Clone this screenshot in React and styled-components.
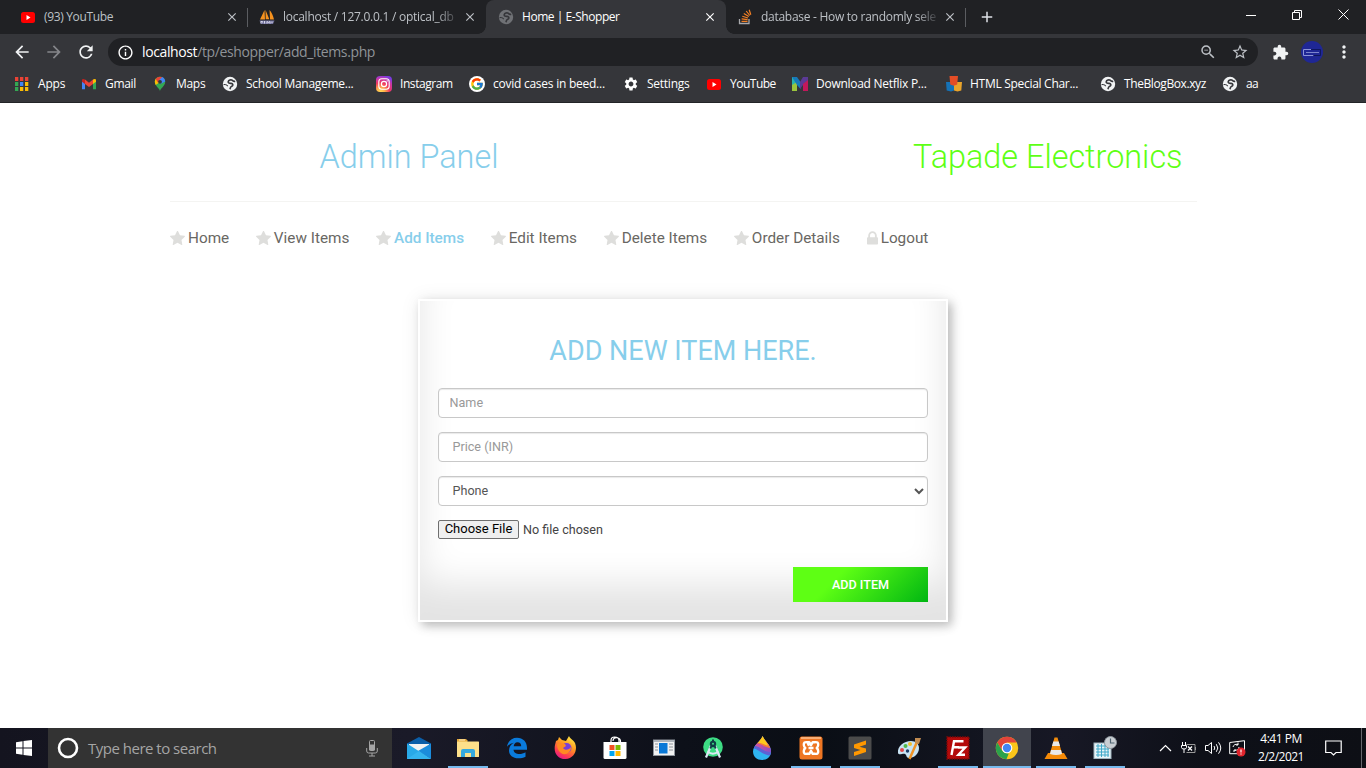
import React from "react";
import styled, { createGlobalStyle, css } from "styled-components";
import {
  MdArrowBack, MdArrowForward, MdRefresh, MdInfoOutline, MdExtension,
  MdMoreVert, MdStarBorder, MdSettings, MdZoomOut, MdClose, MdAdd,
} from "react-icons/md";
import { FcGoogle } from "react-icons/fc";

const Global = createGlobalStyle`
  *, *::before, *::after { box-sizing: border-box; }
  body { margin: 0; background: #fff; overflow: hidden; }
  svg { display: block; flex: none; }
`;

const ui = `"Segoe UI", "Open Sans", "Noto Sans", sans-serif`;

const Screen = styled.div`
  width: 1366px;
  height: 768px;
  display: flex;
  flex-direction: column;
  overflow: hidden;
`;

/* ---------- browser chrome ---------- */
const TabStrip = styled.header`
  height: 34px;
  flex: none;
  display: flex;
  background: #202124;
  padding-left: 8px;
  font: 12px/34px ${ui};
`;
const Tab = styled.div`
  position: relative;
  width: ${(p) => p.$w}px;
  padding: 0 9px 0 ${(p) => p.$pad}px;
  display: flex;
  align-items: center;
  color: ${(p) => (p.$active ? "#fff" : "#bdc1c6")};
  ${(p) => p.$line && css`
    background: linear-gradient(#5b5d61, #5b5d61) right 8px / 1px 19px no-repeat;
  `}
  ${(p) => p.$active && css`
    background: #35363a;
    border-radius: 8px 8px 0 0;
    &::before, &::after {
      content: "";
      position: absolute;
      bottom: 0;
      width: 8px;
      height: 8px;
    }
    &::before { left: -8px; background: radial-gradient(circle at 0 0, transparent 7.5px, #35363a 8px); }
    &::after { right: -8px; background: radial-gradient(circle at 100% 0, transparent 7.5px, #35363a 8px); }
  `}
`;
const TabTitle = styled.span`
  flex: 1;
  margin: 0 8px;
  margin-right: ${(p) => (p.$fade ? 6 : 8)}px;
  white-space: nowrap;
  letter-spacing: ${(p) => p.$ls || 0}px;
  ${(p) => p.$fade && css`mask-image: linear-gradient(90deg, #000 88%, rgba(0, 0, 0, 0.15) 100%);`}
`;
const NewTab = styled.div`
  width: 42px;
  display: flex;
  align-items: center;
  justify-content: center;
  color: #dee1e6;
`;
const WindowButtons = styled.div`
  margin-left: auto;
  display: flex;
  height: 29px;
`;
const WindowButton = styled.div`
  width: 46px;
  display: flex;
  align-items: center;
  justify-content: center;
`;

const Toolbar = styled.div`
  height: 36px;
  flex: none;
  background: #35363a;
  display: flex;
  align-items: center;
  padding-left: 12px;
`;
const ToolButton = styled.div`
  width: 32px;
  margin-left: ${(p) => p.$before || 0}px;
  padding-right: ${(p) => (p.$wide ? 0 : 12)}px;
  display: flex;
  align-items: center;
  justify-content: center;
  color: ${(p) => (p.$dim ? "#85868a" : "#f1f3f4")};
`;
const Omnibox = styled.div`
  width: 1150px;
  height: 28px;
  border-radius: 14px;
  background: #202124;
  display: flex;
  align-items: center;
  padding: 0 9px 0 9px;
  color: #fff;
  font: 14px/28px ${ui};
`;
const Url = styled.span`
  flex: 1;
  margin-left: 8px;
  color: #8f9398;
  letter-spacing: -0.38px;
  b { font-weight: 400; color: #fff; }
`;
const OmniActions = styled.div`
  display: flex;
  gap: 14px;
  color: #bdc1c6;
`;
const Avatar = styled.div`
  width: 22px;
  height: 22px;
  margin: 0 5px;
  border-radius: 50%;
  background: #1f2795;
  display: flex;
  align-items: center;
  justify-content: center;
`;

const Bookmarks = styled.nav`
  height: 33px;
  flex: none;
  background: #35363a;
  border-bottom: 1px solid #232427;
  display: flex;
  padding: 0 0 4px 14px;
  font: 12px/28px ${ui};
  color: #fff;
`;
const Bookmark = styled.div`
  width: ${(p) => p.$w}px;
  display: flex;
  align-items: center;
  gap: 8px;
  white-space: nowrap;
  letter-spacing: ${(p) => p.$ls}px;
`;

/* ---------- page ---------- */
const Page = styled.main`
  flex: 1;
  font-family: Roboto, sans-serif;
  padding-left: 170px;
`;
const Brand = styled.div`
  width: 1027px;
  height: 99px;
  border-bottom: 1px solid #f4f4f2;
  padding: 34px 14.500px 0 149.500px;
  display: flex;
  justify-content: space-between;
  font-size: 32.4px;
  line-height: 40px;
  font-weight: 300;
`;
const BrandText = styled.span`
  color: ${(p) => p.$color};
`;
const Menu = styled.nav`
  display: flex;
  gap: 26.7px;
  padding-top: 26px;
  font-size: 15.3px;
  line-height: 20px;
`;
const MenuItem = styled.a`
  display: flex;
  align-items: center;
  gap: 3px;
  color: ${(p) => (p.$active ? "#87ceeb" : "#696763")};
  font-weight: ${(p) => (p.$active ? 500 : 400)};
`;
const Card = styled.form`
  width: 530px;
  height: 323px;
  margin: 51px 0 0 248px;
  padding: 35px 18px 0;
  border: 2px solid #fff;
  background: #fff;
  box-shadow: inset 0 -36px 36px #e4e4e4, 0 0 18px rgba(0, 0, 0, 0.08),
    4px 4px 9px rgba(0, 0, 0, 0.23);
  display: flex;
  flex-direction: column;
`;
const CardTitle = styled.h2`
  margin: 0 0 22px;
  height: 30px;
  text-align: center;
  color: #87ceeb;
  font-size: 27px;
  line-height: 30px;
  font-weight: 400;
`;
const fieldStyle = css`
  width: 100%;
  height: 30px;
  flex: none;
  margin: 0 0 14px;
  border: 1px solid #c8c8c8;
  border-radius: 4px;
  background: #fff;
  box-shadow: inset 0 1px 1px rgba(0, 0, 0, 0.09);
  font: 12.6px Roboto, sans-serif;
  color: #555;
  outline: 0;
`;
const Field = styled.input`
  ${fieldStyle}
  padding: 0 10px 1px ${(p) => p.$indent}px;
  &::placeholder { color: #999; }
`;
const Select = styled.select`
  ${fieldStyle}
  padding: 0 0 1px 9.500px;
`;
const FileRow = styled.div`
  display: flex;
  align-items: center;
  height: 19px;
  gap: 4px;
  color: #444;
  font-size: 12.6px;
`;
const FileButton = styled.button`
  width: 81px;
  height: 19px;
  padding: 0 0 2px;
  border: 1px solid #6f6f6f;
  border-radius: 2px;
  background: #efefef;
  font: 13px/15px Roboto, sans-serif;
  color: #000;
  white-space: nowrap;
`;
const Submit = styled.button`
  width: 135px;
  height: 35px;
  margin: 28px 0 0 auto;
  border: 0;
  padding: 0;
  background: linear-gradient(135deg, #5eff14 32%, #00b612 100%);
  color: #fff;
  font: 500 12.6px Roboto, sans-serif;
`;

/* ---------- task bar ---------- */
const TaskBar = styled.footer`
  height: 40px;
  flex: none;
  display: flex;
  background: linear-gradient(90deg, #14141f 0, #1a1a28 30%, #0d1019 50%, #0a0e15 60%, #171825 78%, #0e1018 88%, #0d0f15 100%);
  font-family: ${ui};
  color: #fff;
`;
const Start = styled.div`
  width: 48px;
  display: flex;
  align-items: center;
  justify-content: center;
`;
const Search = styled.div`
  width: 344px;
  background: #333;
  display: flex;
  align-items: center;
  padding: 0 14px 0 9px;
  color: #a5a5a5;
  font-size: 15px;
  letter-spacing: -0.5px;
  span { flex: 1; margin-left: 9px; }
`;
const Apps = styled.div`
  display: flex;
  gap: 1px;
  padding-left: 3px;
`;
const App48 = styled.div`
  width: 48px;
  display: flex;
  align-items: center;
  justify-content: center;
  ${(p) => p.$open && css`background: linear-gradient(#76b9ed, #76b9ed) center bottom / 40px 2px no-repeat;`}
  ${(p) => p.$focus && css`background: linear-gradient(#76b9ed, #76b9ed) center bottom / 48px 2px no-repeat #41444d;`}
`;
const Tray = styled.div`
  margin-left: auto;
  display: flex;
  align-items: center;
`;
const TrayIcon = styled.div`
  width: ${(p) => p.$w}px;
  display: flex;
  justify-content: center;
`;
const Clock = styled.div`
  width: 62px;
  margin-left: 1px;
  text-align: center;
  font-size: 12px;
  line-height: 18px;
  letter-spacing: -0.5px;
  white-space: nowrap;
`;
const Peek = styled.div`
  width: 5px;
  height: 40px;
  margin-left: 7px;
  border-left: 1px solid #65666c;
`;

/* ---------- small icons ---------- */
const YouTube = () => (
  <svg width="16" height="16" viewBox="0 0 16 16">
    <rect x="1" y="3" width="14" height="11" rx="2.500" fill="#f00" />
    <path d="M6.500 6v5l4-2.500z" fill="#fff" />
  </svg>
);
const Globe = ({ fg = "#f1f3f4", bg = "#35363a" }) => (
  <svg width="16" height="16" viewBox="0 0 16 16">
    <circle cx="8" cy="8" r="7.200" fill={fg} />
    <path d="M13.200 5.200C11.800 5.600 10.800 5 10.200 4.200 9 3.400 6.600 4 6.200 5.700c-.3 1.500 1.300 1.600 2.600 1.700 1.700.1 2.300 1 1.900 2-.4.900-1.500 1-2 1.700-.4.700-.4 1.400-1 2" fill="none" stroke={bg} strokeWidth="1.600" />
    <path d="M1.600 8.600c1.500-.2 3.200.1 4.200 1.500" fill="none" stroke={bg} strokeWidth="1.100" />
  </svg>
);
const PhpMyAdmin = () => (
  <svg width="16" height="16" viewBox="0 0 16 16">
    <path d="M5.500 1 1 10.500h5zM6.500.8l.2 9.500h3.600zM10.500 1l.6 9.500H15C14 6.500 12.500 3 10.500 1z" fill="#f6921e" />
    <path d="M.5 11.500h15L14 15H2z" fill="#75759f" />
    <path d="M2 14.500v-2l1.500 0v1M5.500 14.500v-2.500M8 14.500v-2l1.500 1 1.500-1v2M13 14v-1.500" fill="none" stroke="#d8d8ea" />
  </svg>
);
const StackOverflow = () => (
  <svg width="16" height="16" viewBox="0 0 16 16" fill="none">
    <path d="M2.500 10v4.500h9.500V10" stroke="#a8a9ac" strokeWidth="1.300" />
    <path d="M4.500 12.300h6M4.600 9.900l6 .7M5.300 7.200l5.700 1.800M6.800 4.400l5 3.200M9.200 2l3.600 4.500M12.200.8l1.600 4.900" stroke="#f48024" strokeWidth="1.200" />
  </svg>
);
const AppsGrid = () => (
  <svg width="16" height="16" viewBox="0 0 16 16">
    {["#ea4335", "#ea4335", "#ea4335", "#34a853", "#4285f4", "#fbbc05", "#34a853", "#fbbc05", "#fbbc05"].map((c, i) => (
      <rect key={i} x={1 + (i % 3) * 5} y={1 + Math.floor(i / 3) * 5} width="3.300" height="4" fill={c} />
    ))}
  </svg>
);
const Gmail = () => (
  <svg width="16" height="16" viewBox="0 0 16 16">
    <path d="M1 4.500v8.800h3V7z" fill="#4285f4" />
    <path d="M12 7v6.300h3V4.500z" fill="#34a853" />
    <path d="M4 3.600v4.300l4 3 4-3V3.600L8 6.700z" fill="#ea4335" />
    <path d="M1 5.700V4.300c0-1.600 1.700-1.800 3-.7v4.300z" fill="#c5221f" />
    <path d="M15 5.700V4.300c0-1.600-1.700-1.800-3-.7v4.300z" fill="#fbbc04" />
  </svg>
);
const MapPin = () => (
  <svg width="16" height="16" viewBox="0 0 16 16">
    <path d="M8 15.500c0-3 5.200-5 5.200-9.700C13.200 2.700 10.800.7 8 .7S2.800 2.700 2.800 5.800C2.800 10.500 8 12.500 8 15.500z" fill="#34a853" />
    <path d="M4 2.500 8 6 3.700 9C2.500 6.800 2.500 4.500 4 2.500z" fill="#fbbc04" />
    <path d="M3.700 2.900C5.200.5 8.500.2 10.500 1.300L5.800 6.500z" fill="#ea4335" />
    <path d="M7 4.300 10.200 1c2 .8 3 2.800 3 4.500L8.500 8z" fill="#4285f4" />
    <circle cx="8" cy="5.800" r="1.900" fill="#35363a" />
  </svg>
);
const Instagram = () => (
  <svg width="16" height="16" viewBox="0 0 16 16">
    <defs>
      <radialGradient id="ig" cx=".28" cy="1" r="1.050">
        <stop offset="0" stopColor="#fd5" /><stop offset=".25" stopColor="#ffb04a" />
        <stop offset=".55" stopColor="#f0385f" /><stop offset=".8" stopColor="#c837ab" /><stop offset="1" stopColor="#7a3be0" />
      </radialGradient>
    </defs>
    <rect width="16" height="16" rx="4" fill="url(#ig)" />
    <rect x="2.800" y="2.800" width="10.400" height="10.400" rx="3" fill="none" stroke="#fff" strokeWidth="1.100" />
    <circle cx="8" cy="8" r="2.600" fill="none" stroke="#fff" strokeWidth="1.200" />
    <circle cx="11.200" cy="4.900" r=".7" fill="#fff" />
  </svg>
);
const Disc = styled.span`
  width: 16px;
  height: 16px;
  border-radius: 50%;
  background: #fff;
  display: flex;
  align-items: center;
  justify-content: center;
`;
const NetflixM = () => (
  <svg width="16" height="16" viewBox="0 0 16 16">
    <path d="M0 1h5v14H0z" fill="#27b5ad" /><path d="M0 9l5-3v9H0z" fill="#9bc53d" />
    <path d="M0 1h5l3.500 5v7L5 9z" fill="#1779ba" /><path d="M8 6l3-5h5v6l-5 2-3 4z" fill="#5b3a96" />
    <path d="M11 8l5-4v11h-5z" fill="#c2185b" />
  </svg>
);
const HtmlBoxes = () => (
  <svg width="16" height="16" viewBox="0 0 16 16">
    <path d="M0 6h8v8.500l-3 1-4.300-1z" fill="#1572b6" /><path d="M8 6h8l-.7 8.500-3.800 1-3.500-1z" fill="#e9a42b" />
    <path d="M3.500 0h8.500l-.8 8.500-3.500 1.300L4.300 8.500z" fill="#e44d26" />
  </svg>
);
const Star = () => (
  <svg width="15" height="15" viewBox="64 64 1664 1664" fill="#dededc">
    <path d="M1728 647q0 22-26 48l-363 354 86 500q1 7 1 20 0 21-10.500 35.500t-30.500 14.500q-19 0-40-12l-449-236-449 236q-22 12-40 12-21 0-31.500-14.500t-10.500-35.500q0-6 2-20l86-500-364-354q-25-27-25-48 0-37 56-46l502-73 225-455q19-41 49-41t49 41l225 455 502 73q56 9 56 46z" />
  </svg>
);
const Lock = () => (
  <svg width="11" height="15" viewBox="320 150 1152 1500" fill="#dededc">
    <path d="M640 768h512v-192q0-106-75-181t-181-75-181 75-75 181v192zm832 96v576q0 40-28 68t-68 28h-960q-40 0-68-28t-28-68v-576q0-40 28-68t68-28h32v-192q0-184 132-316t316-132 316 132 132 316v192h32q40 0 68 28t28 68z" />
  </svg>
);

/* ---------- task bar icons ---------- */
const Icon24 = ({ children }) => <svg width="24" height="24" viewBox="0 0 24 24">{children}</svg>;
const Mail = () => (
  <Icon24>
    <path d="M0 7.500 12 1l12 6.500v2L12 17 0 9.500z" fill="#0b5ea8" />
    <path d="M2 8h20v8H2z" fill="#f2f2f2" />
    <path d="M0 7.500 24 23H0z" fill="#29a9e8" /><path d="M24 7.500V23L11 15z" fill="#1b8cdc" /><path d="M0 23h24L12 15z" fill="#35b4ef" />
  </Icon24>
);
const Explorer = () => (
  <Icon24>
    <path d="M1 3h9l1.500 1.500V7H1z" fill="#e5a93a" /><rect x="3" y="3.500" width="6" height="1" fill="#fff4c7" />
    <rect x="1" y="5.500" width="22" height="15.500" rx=".6" fill="#fde08a" />
    <path d="M5 21v-6q0-2 2-2h10q2 0 2 2v6h-4v-4H9v4z" fill="#35a9de" />
  </Icon24>
);
const Edge = () => (
  <Icon24>
    <path d="M2 10.800C3 4.800 7 1.800 12 1.800c6 0 10 4.200 10 10.200v1.800H8.500c.3 3 3 4.200 5.800 4.200 2.200 0 4.400-.6 6.200-1.800v4.600c-2 1.100-4.700 1.500-7 1.500C7.800 22.300 4 19.400 4 14.500c0-3.600 2-6.400 5-7.800-3 .5-5.500 2-7 4.100zM8.700 10.200h7.500c0-2.700-1.300-4-3.700-4-2.300 0-3.600 1.700-3.800 4z" fill="#0a7bdc" />
  </Icon24>
);
const Firefox = () => (
  <Icon24>
    <defs><linearGradient id="ff" x1=".8" y1="0" x2=".25" y2="1"><stop offset="0" stopColor="#fff04a" /><stop offset=".4" stopColor="#ff9a1f" /><stop offset=".75" stopColor="#ff3f4e" /><stop offset="1" stopColor="#e3168a" /></linearGradient></defs>
    <path d="M2 5l2-1 1-3 3 3 4 1 3-5c1 3 4 3.500 6 7 3 7-1 16-9.500 16S-.5 16 1 9z" fill="url(#ff)" />
    <circle cx="12.500" cy="12" r="5" fill="#7a3fd8" />
    <path d="M3 8c3-2 5 0 8 0l1 2-3 2c2 3 6 2 8-1 0 6-6 9-10 6-3-2-4-6-4-9z" fill="#ff8a22" />
  </Icon24>
);
const Store = () => (
  <Icon24>
    <path d="M8 7V4.500C8 2.300 9.200 1 11.500 1S16 2.300 16 4.500V7M10 5c0-5 8-4 7.500 1" fill="none" stroke="#fff" strokeWidth="1.200" />
    <path d="M.5 6h23v15.500q0 1.500-1.500 1.500H2Q.5 23 .5 21.500z" fill="#fff" />
    <path d="M6.500 9h5v5h-5z" fill="#f25022" /><path d="M12.500 9h5v5h-5z" fill="#7fba00" />
    <path d="M6.500 15h5v5h-5z" fill="#00a4ef" /><path d="M12.500 15h5v5h-5z" fill="#ffb900" />
  </Icon24>
);
const NewsWindow = () => (
  <Icon24>
    <rect x="1.500" y="4" width="21" height="15.500" fill="#f1f1f1" stroke="#8e949c" /><path d="M2 4h20v2H2z" fill="#aeb4bb" />
    <rect x="7" y="7" width="8.500" height="10.500" fill="#0a78d7" />
    <path d="M3 8h3M3 11h3M3 14h3M17 8h4M17 11h4M17 14h4" stroke="#8d9299" />
  </Icon24>
);
const AndroidStudio = () => (
  <Icon24>
    <circle cx="12" cy="11" r="9.800" fill="#3ddc84" />
    <path d="M12 3.500v2" stroke="#0f3d45" strokeWidth="2" /><circle cx="12" cy="8" r="3.200" fill="#0f3d45" />
    <path d="M9.800 10 5 21.500M14.200 10 19 21.500" stroke="#dce9f4" strokeWidth="2.200" fill="none" />
    <path d="M6.500 15.500q5.500 4.500 11 0" stroke="#dce9f4" strokeWidth="1.800" fill="none" />
    <path d="M9.500 9.500 8.500 12l1.500 1 2-3.500 2 3.500 1.500-1-1-2.500z" fill="#0f3d45" />
    <circle cx="12" cy="7.800" r="1" fill="#3ddc84" />
  </Icon24>
);
const PaintDrop = () => (
  <Icon24>
    <defs>
      <clipPath id="drop"><path d="M12.500 0c-1 5-9.500 9-9.500 15.500C3 20.500 7 24 12 24s9-3.500 9-8.500C21 9 15 6 12.500 0z" /></clipPath>
      <linearGradient id="band" x1="0" x2="1"><stop offset="0" stopColor="#f0508c" /><stop offset="1" stopColor="#7c4fd0" /></linearGradient>
    </defs>
    <g clipPath="url(#drop)">
      <path d="M0 0h24v24H0z" fill="#2fb4f0" />
      <path d="M0 12C8 10 12 22 24 19V4H0z" fill="#5d62d4" />
      <path d="M0 10C9 7 13 18 24 16V4H0z" fill="url(#band)" />
      <path d="M4 8c6-2 10 4 18 4V2L12-1z" fill="#f4793c" />
      <path d="M6 7c5-1 8 2 12 2.500L13-1z" fill="#fdc91d" />
    </g>
  </Icon24>
);
const Xampp = () => (
  <Icon24>
    <rect x=".5" y=".5" width="23" height="23" rx="2.500" fill="#ee7623" /><path d="M2 1h20v2H2z" fill="#f8ae75" />
    <path d="M12 9.500H9.200a2.600 2.600 0 1 1 2.600-2.600M6 8.500v7M18 8.500v7" fill="none" stroke="none" />
    <path d="M10 9.800 8.300 6.200Q4.500 5.500 4.800 9q.2 2 1.500 3-1.300 1-1.500 3-.3 3.500 3.500 2.800h2l1.700-3 1.700 3h2q3.800.7 3.500-2.800-.2-2-1.500-3 1.300-1 1.500-3 .3-3.500-3.500-2.800h-2l-1.700 3-1.700-3h-2M9.500 12h5" fill="none" stroke="#fff" strokeWidth="2.400" strokeLinejoin="round" />
  </Icon24>
);
const Sublime = () => (
  <Icon24>
    <rect x=".5" y=".5" width="23" height="23" rx="1.500" fill="#4b4b4b" />
    <path d="M6 8.500 18 4.500v4l-6.500 2.200L18 12.500V16L6 20v-4l6.500-2L6 12z" fill="#ff9800" />
  </Icon24>
);
const Paint = () => (
  <Icon24>
    <path d="M1 17C0 10 7 5 14 5c5 0 8 3 8 7 0 6-5 10-10 10-3 0-2-3-4-4s-6 2-7-1z" fill="#c8e3f3" />
    <circle cx="5" cy="14" r="2" fill="#e34848" /><circle cx="8.500" cy="10" r="2" fill="#51b848" /><circle cx="13" cy="8" r="2" fill="#f3bd2d" /><circle cx="10.500" cy="15" r="1.700" fill="#1b3b65" />
    <path d="M20 6 12.500 23" stroke="#f09426" strokeWidth="2.500" /><path d="M18 2l6 0-2 6-4-1z" fill="#c08b51" />
  </Icon24>
);
const FileZilla = () => (
  <Icon24>
    <rect x="1" y="1" width="22" height="22" fill="#b30a0a" stroke="#7d0909" strokeWidth="1.500" strokeDasharray="1.500 1" />
    <path d="M5.500 19 8 5.200h9.500M7 11.200h6M12 11.500h7.200l-6.800 7.300H19" fill="none" stroke="#fff" strokeWidth="2.400" />
  </Icon24>
);
const Chrome = () => (
  <Icon24>
    <circle cx="12" cy="12" r="11.200" fill="#fbc61a" />
    <path d="M2.300 6.400A11.200 11.200 0 0 1 21.700 6.400H12L7.200 14.800z" fill="#e2443a" />
    <path d="M2.300 6.400 7.200 14.800q2 3 6.500 2.600L11.500 23.200A11.200 11.200 0 0 1 2.300 6.400z" fill="#2ba24c" />
    <circle cx="12" cy="12" r="5.300" fill="#fff" /><circle cx="12" cy="12" r="4.200" fill="#4285f4" />
  </Icon24>
);
const Vlc = () => (
  <Icon24>
    <path d="M4 17h16l3.500 6H.5z" fill="#f58a07" /><path d="M10.500 1.500h3L18.500 19q-6.500 3-13 0z" fill="#f28c0c" />
    <path d="M9.300 5.500h5.400l1.300 4.500H8zM7 14h10l1 4q-6 2-12 0z" fill="#e9e9e9" />
  </Icon24>
);
const TaskGrid = () => (
  <Icon24>
    <rect x="1" y="7" width="17" height="15.500" fill="#e8f4f8" stroke="#9fb3bd" />
    <path d="M3 10h13M3 13h13M3 16h13M3 19h13M5 8v13M8.500 8v13M12 8v13M15 8v13" stroke="#3fa9c9" />
    <circle cx="17.500" cy="6.500" r="6" fill="#c9ced3" stroke="#8d959c" /><path d="M17.500 2.500v4.500h4" fill="none" stroke="#4f6472" strokeWidth="1.200" />
  </Icon24>
);

const bookmarks = [
  ["Apps", AppsGrid, 67, -0.2], ["Gmail", Gmail, 71, -0.3], ["Maps", MapPin, 70, -0.3],
  ["School Manageme...", Globe, 154, -0.27], ["Instagram", Instagram, 93, -0.42],
  ["covid cases in beed...", () => <Disc><FcGoogle size={14} /></Disc>, 154, -0.25],
  ["Settings", () => <MdSettings size={16} />, 83, -0.25], ["YouTube", YouTube, 86, -0.5],
  ["Download Netflix P...", NetflixM, 154, -0.27], ["HTML Special Char...", HtmlBoxes, 154, -0.29],
  ["TheBlogBox.xyz", Globe, 122, -0.4], ["aa", Globe, 50, -0.6],
];
const menu = ["Home", "View Items", "Add Items", "Edit Items", "Delete Items", "Order Details", "Logout"];
const apps = [
  [Mail], [Explorer, 1], [Edge], [Firefox], [Store], [NewsWindow], [AndroidStudio], [PaintDrop],
  [Xampp, 1], [Sublime, 1], [Paint], [FileZilla, 1], [Chrome, 1, 1], [Vlc, 1], [TaskGrid, 1],
];

export default function App() {
  return (
    <Screen>
      <Global />
      <TabStrip>
        <Tab $w={240} $pad={12} $line>
          <YouTube /><TabTitle $ls={-0.35}>(93) YouTube</TabTitle><MdClose size={14} />
        </Tab>
        <Tab $w={238} $pad={11}>
          <PhpMyAdmin /><TabTitle $fade $ls={-0.26}>localhost / 127.0.0.1 / optical_db</TabTitle><MdClose size={14} />
        </Tab>
        <Tab $w={240} $pad={12} $active>
          <Globe fg="#6f7175" /><TabTitle $ls={-0.45}>Home | E-Shopper</TabTitle><MdClose size={14} />
        </Tab>
        <Tab $w={240} $pad={11} $line>
          <StackOverflow /><TabTitle $fade $ls={-0.28}>database - How to randomly sele</TabTitle><MdClose size={14} />
        </Tab>
        <NewTab><MdAdd size={18} /></NewTab>
        <WindowButtons>
          <WindowButton><svg width="10" height="10" stroke="#fff"><path d="M0 5.500h10" /></svg></WindowButton>
          <WindowButton><svg width="10" height="10" fill="none" stroke="#fff"><path d="M.5 2.500h7v7h-7zM2.500 2.500v-2h7v7h-2" /></svg></WindowButton>
          <WindowButton><svg width="11" height="11" stroke="#fff"><path d="M.5.5l10 10M10.500.5l-10 10" /></svg></WindowButton>
        </WindowButtons>
      </TabStrip>
      <Toolbar>
        <ToolButton><MdArrowBack size={20} /></ToolButton>
        <ToolButton $dim><MdArrowForward size={20} /></ToolButton>
        <ToolButton><MdRefresh size={20} /></ToolButton>
        <Omnibox>
          <MdInfoOutline size={17} />
          <Url><b>localhost</b>/tp/eshopper/add_items.php</Url>
          <OmniActions><MdZoomOut size={18} /><MdStarBorder size={18} /></OmniActions>
        </Omnibox>
        <ToolButton $wide $before={6}><MdExtension size={17} /></ToolButton>
        <Avatar><svg width="18" height="7" fill="none"><path d="M8 .5H.5v6h10" stroke="#8c93d8" /><path d="M8 .5h9.500v6h-7" stroke="#10175d" /><path d="M3 3.500h13" stroke="#7c84cc" /></svg></Avatar>
        <ToolButton $wide><MdMoreVert size={20} /></ToolButton>
      </Toolbar>
      <Bookmarks>
        {bookmarks.map(([name, Icon, w, ls], i) => (
          <Bookmark key={i} $w={w} $ls={ls}><Icon />{name}</Bookmark>
        ))}
      </Bookmarks>

      <Page>
        <Brand>
          <BrandText $color="#87ceeb">Admin Panel</BrandText>
          <BrandText $color="#5eff14">Tapade Electronics</BrandText>
        </Brand>
        <Menu>
          {menu.map((m) => (
            <MenuItem key={m} $active={m === "Add Items"}>{m === "Logout" ? <Lock /> : <Star />}{m}</MenuItem>
          ))}
        </Menu>
        <Card>
          <CardTitle>ADD NEW ITEM HERE.</CardTitle>
          <Field $indent={10.5} placeholder="Name" />
          <Field $indent={13.5} placeholder="Price (INR)" />
          <Select defaultValue="Phone"><option>Phone</option></Select>
          <FileRow><FileButton type="button">Choose File</FileButton>No file chosen</FileRow>
          <Submit type="button">ADD ITEM</Submit>
        </Card>
      </Page>

      <TaskBar>
        <Start><svg width="16" height="16" viewBox="0 0 16 16" fill="#fff"><path d="M0 2.200 6.500 1.300v6.200H0zM7.500 1.100 16 0v7.500H7.500zM0 8.500h6.500v6.200L0 13.800zM7.500 8.500H16V16l-8.500-1.100z" /></svg></Start>
        <Search>
          <svg width="22" height="22"><circle cx="11" cy="11" r="9" fill="none" stroke="#fff" strokeWidth="2.600" /></svg>
          <span>Type here to search</span>
          <svg width="12" height="17" fill="none" stroke="#a5a5a5"><rect x="3.500" y=".5" width="5" height="10" rx="1" /><path d="M3.500 5h5v5h-5z" fill="#a5a5a5" /><path d="M.7 8v3q0 2 2 2h6.600q2 0 2-2V8M6 13v3M3 16h6" /></svg>
        </Search>
        <Apps>
          {apps.map(([Icon, open, focus], i) => (
            <App48 key={i} $open={open} $focus={focus}><Icon /></App48>
          ))}
        </Apps>
        <Tray>
          <TrayIcon $w={22}><svg width="13" height="8" fill="none" stroke="#fff" strokeWidth="1.200"><path d="M1 7l5.500-5.500L12 7" /></svg></TrayIcon>
          <TrayIcon $w={25}><svg width="16" height="14" fill="none" stroke="#fff"><path d="M1.500 1v3M4.500 1v3M.5 4.500h5v2q0 1.500-2.500 1.500t-2.500-1.500zM3 8v4" /><path d="M5.500 3.500h8.500v8H5.500" stroke="#999" /><path d="M14.500 6v3" stroke="#999" /><path d="M7 5.500l4 4M11 5.500l-4 4" strokeWidth="1.300" /></svg></TrayIcon>
          <TrayIcon $w={24}><svg width="17" height="14" fill="none" stroke="#fff"><path d="M.5 4.500H3L6.500 1.500v11L3 9.500H.5zM9 5q1.500 2 0 4M11.300 3.200q3 3.800 0 7.600M13.500 1.300q4.500 5.700 0 11.400" /></svg></TrayIcon>
          <TrayIcon $w={24}><svg width="17" height="17" fill="none" stroke="#fff"><path d="M.7 2.500 15.500.7v13H.7z" /><path d="M4 7q1-3.500 5-2.500M9 2.500v2.500H7M10 7q0 3-4.500 3.500M5 12v-2h2" /><circle cx="12" cy="12" r="4.500" fill="#e0242c" stroke="none" /><path d="M12 9.500v3M12 13.500v1" strokeWidth="1.200" /></svg></TrayIcon>
          <Clock>4:41 PM<br />2/2/2021</Clock>
          <TrayIcon $w={42}><svg width="17" height="16" fill="none" stroke="#fff" strokeWidth="1.200"><path d="M.7 1h15.500v11.500H11L8.500 15 6 12.500H.7z" /></svg></TrayIcon>
          <Peek />
        </Tray>
      </TaskBar>
    </Screen>
  );
}
